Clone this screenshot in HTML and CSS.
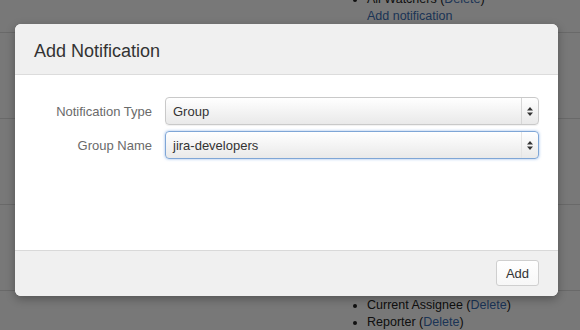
FILE: index.html
```html
<!DOCTYPE html>
<html>
<head>
<meta charset="utf-8">
<link rel="stylesheet" href="styles.css">
</head>
<body>
<div class="page">
  <div class="row row-first">
    <div class="cell-left"></div>
    <div class="cell-right">
      <ul class="list">
        <li>All Watchers (<a class="link">Delete</a>)</li>
      </ul>
      <div class="add-link"><a class="link">Add notification</a></div>
    </div>
  </div>
  <div class="row row-mid"><div class="cell-left"></div><div class="cell-right"></div></div>
  <div class="row row-mid"><div class="cell-left"></div><div class="cell-right"></div></div>
  <div class="row row-mid"><div class="cell-left"></div><div class="cell-right"></div></div>
  <div class="row row-last">
    <div class="cell-left"></div>
    <div class="cell-right">
      <ul class="list">
        <li>Current Assignee (<a class="link">Delete</a>)</li>
        <li>Reporter (<a class="link">Delete</a>)</li>
      </ul>
    </div>
  </div>
</div>
<div class="overlay"></div>
<div class="modal">
  <div class="modal-header"><h2 class="modal-title">Add Notification</h2></div>
  <div class="modal-body">
    <div class="field">
      <label class="field-label">Notification Type</label>
      <div class="select">
        <span class="select-value">Group</span>
        <span class="select-arrows">
          <svg width="6" height="9" viewBox="0 0 6 9"><path d="M3 0 L6 3.5 L0 3.5 Z M0 5.5 L6 5.5 L3 9 Z" fill="#333"/></svg>
        </span>
      </div>
    </div>
    <div class="field">
      <label class="field-label">Group Name</label>
      <div class="select select-focus">
        <span class="select-value">jira-developers</span>
        <span class="select-arrows">
          <svg width="6" height="9" viewBox="0 0 6 9"><path d="M3 0 L6 3.5 L0 3.5 Z M0 5.5 L6 5.5 L3 9 Z" fill="#333"/></svg>
        </span>
      </div>
    </div>
  </div>
  <div class="modal-footer"><button class="btn">Add</button></div>
</div>
</body>
</html>
```

FILE: styles.css
```css
html, body {
  margin: 0;
  padding: 0;
}
body {
  width: 580px;
  height: 330px;
  overflow: hidden;
  background: #fff;
  font-family: "Liberation Sans", Arial, Helvetica, sans-serif;
  color: #222;
  position: relative;
}
.page {
  margin-top: -15px;
}
.row {
  display: grid;
  grid-template-columns: 340px 1fr;
  border-bottom: 1px solid #e0e0e0;
  box-sizing: border-box;
  font-size: 12.5px;
  line-height: 17px;
}
.row-first {
  height: 48px;
  padding-top: 6px;
}
.row-mid {
  height: 86px;
}
.row-last {
  padding-top: 6px;
  height: 39px;
  border-bottom: none;
  overflow: hidden;
}
.list {
  margin: 0;
  padding-left: 27px;
  list-style: disc;
}
.add-link {
  padding-left: 27px;
}
.link {
  color: #3b6fb6;
  text-decoration: none;
}
.overlay {
  position: absolute;
  inset: 0;
  background: rgba(0, 0, 0, 0.53);
}
.modal {
  position: absolute;
  top: 24px;
  left: 15px;
  width: 543px;
  background: #fff;
  border-radius: 6px;
  box-shadow: 0 3px 10px rgba(0, 0, 0, 0.3);
  overflow: hidden;
}
.modal-header {
  background: #f0f0f0;
  border-bottom: 1px solid #dcdcdc;
  padding: 15px 19px 11px;
}
.modal-title {
  margin: 0;
  font-size: 18px;
  line-height: 24px;
  font-weight: normal;
  color: #333;
}
.modal-body {
  height: 175px;
  box-sizing: border-box;
  padding: 22px 19px 0 0;
  display: flex;
  flex-direction: column;
  gap: 6px;
}
.field {
  display: flex;
  align-items: center;
}
.field-label {
  width: 137px;
  text-align: right;
  font-size: 13px;
  color: #6a6a6a;
  padding-right: 13px;
  box-sizing: content-box;
}
.select {
  flex: 1;
  height: 28px;
  box-sizing: border-box;
  border: 1px solid #c9c9c9;
  border-radius: 4px;
  background: linear-gradient(#ffffff, #e9e9e9);
  display: flex;
  align-items: center;
  box-shadow: 0 1px 1px rgba(0, 0, 0, 0.06);
}
.select-focus {
  border-color: #7fa6d6;
  box-shadow: 0 0 3px rgba(82, 140, 220, 0.6);
}
.select-value {
  flex: 1;
  padding-left: 7px;
  font-size: 13px;
  color: #333;
}
.select-arrows {
  width: 16px;
  align-self: stretch;
  border-left: 1px solid #d6d6d6;
  display: flex;
  align-items: center;
  justify-content: center;
}
.select-focus .select-arrows {
  border-left-color: #e4e4e4;
}
.modal-footer {
  background: #f0f0f0;
  border-top: 1px solid #d9d9d9;
  padding: 9px 19px 10px;
  display: flex;
  justify-content: flex-end;
}
.btn {
  height: 26px;
  width: 43px;
  padding: 0;
  font-family: inherit;
  font-size: 13px;
  color: #333;
  background: linear-gradient(#ffffff, #f7f7f7);
  border: 1px solid #cfcfcf;
  border-radius: 3px;
}
```
